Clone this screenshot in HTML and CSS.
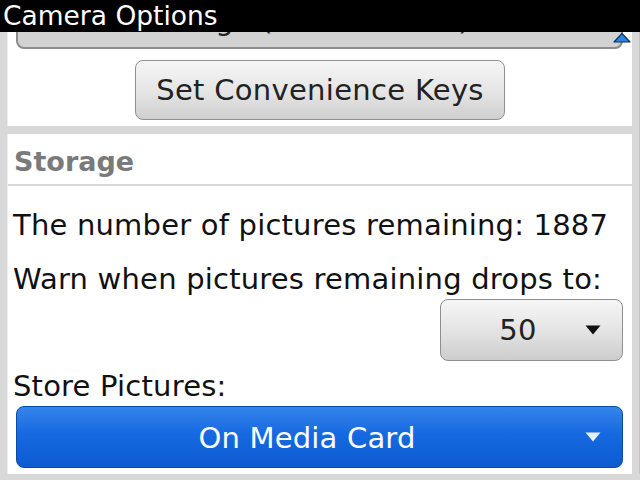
FILE: index.html
```html
<!DOCTYPE html>
<html lang="en">
<head>
<meta charset="UTF-8">
<title>Camera Options</title>
<link rel="stylesheet" href="styles.css">
</head>
<body>
<div class="titlebar">Camera Options</div>
<div class="screen">
    <div class="panel panel-top">
        <div class="choice choice-partial">
            <span class="choice-label">Large (2560 x 1920)</span>
            <svg class="scroll-up" width="18" height="11" viewBox="0 0 18 11">
                <path d="M1 10 L9 1.5 L17 10 Z" fill="#2b86e0" stroke="#0d2f5a" stroke-width="1.2" stroke-linejoin="round"/>
            </svg>
        </div>
        <button class="btn btn-keys">Set Convenience Keys</button>
    </div>
    <div class="panel panel-storage">
        <div class="section-title">Storage</div>
        <div class="line line-first">The number of pictures remaining: 1887</div>
        <div class="line line-warn">Warn when pictures remaining drops to:</div>
        <div class="choice choice-small">
            <span class="choice-label">50</span>
            <svg class="arrow" width="16" height="10" viewBox="0 0 16 10">
                <path d="M0.5 0.5 L15.5 0.5 L8 9.5 Z" fill="#111"/>
            </svg>
        </div>
        <div class="line line-store">Store Pictures:</div>
        <div class="choice choice-focus">
            <span class="choice-label">On Media Card</span>
            <svg class="arrow" width="16" height="10" viewBox="0 0 16 10">
                <path d="M0.5 0.5 L15.5 0.5 L8 9.5 Z" fill="#e8eef8"/>
            </svg>
        </div>
    </div>
</div>
</body>
</html>
```

FILE: styles.css
```css
body {
    margin: 0;
    width: 640px;
    height: 480px;
    overflow: hidden;
    background-color: #d8d8d8;
    font-family: "DejaVu Sans", "Liberation Sans", sans-serif;
    color: #111;
}
.titlebar {
    position: relative;
    z-index: 2;
    height: 32px;
    background-color: #000;
    color: #fff;
    font-size: 26.5px;
    line-height: 32px;
    padding-left: 3px;
}
.screen {
    display: flex;
    flex-direction: column;
    gap: 8px;
    padding: 0 7px 0 7px;
    border-right: 1px solid #c4c4c4;
    width: 625px;
}
.panel {
    background-color: #fff;
    border-left: 1px solid #ececec;
    overflow: hidden;
}
.panel-top {
    height: 94px;
    display: flex;
    flex-direction: column;
    align-items: center;
}
.choice {
    position: relative;
    display: flex;
    align-items: center;
    box-sizing: border-box;
    height: 62px;
    border-radius: 8px;
    font-size: 29px;
    letter-spacing: 0.2px;
}
.choice-label {
    flex: 1;
    text-align: center;
}
.choice-partial {
    align-self: stretch;
    margin: -45px 9px 0 8px;
    background-color: #d2d2d2;
    border: 2px solid #8c8c8c;
    color: #222;
    overflow: visible;
}
.choice-partial .choice-label {
    padding-top: 4px;
}
.scroll-up {
    position: absolute;
    right: -10px;
    bottom: 4px;
}
.btn {
    margin-top: 11px;
    width: 370px;
    height: 60px;
    border: 1px solid #8f8f8f;
    border-radius: 8px;
    background: linear-gradient(#f6f6f6, #e4e4e4 55%, #cfcfcf);
    font-family: inherit;
    font-size: 29px;
    letter-spacing: 0.3px;
    color: #222;
    padding: 0;
}
.panel-storage {
    height: 340px;
    display: flex;
    flex-direction: column;
}
.section-title {
    height: 52px;
    box-sizing: border-box;
    border-bottom: 2px solid #d6d6d6;
    padding: 9px 0 0 6px;
    font-size: 27px;
    font-weight: bold;
    color: #7a7a7a;
    line-height: 38px;
}
.line {
    font-size: 29px;
    letter-spacing: 0.2px;
    line-height: 40px;
    padding-left: 5px;
    white-space: nowrap;
}
.line-first {
    margin-top: 19px;
}
.line-warn {
    margin-top: 14px;
}
.line-store {
    margin-top: 5px;
}
.choice-small {
    align-self: flex-end;
    width: 183px;
    margin-right: 9px;
    border: 1px solid #8f8f8f;
    background: linear-gradient(#f6f6f6, #e2e2e2 55%, #cdcdcd);
    color: #222;
}
.choice-small .choice-label {
    padding-left: 10px;
}
.choice-small .arrow {
    margin-right: 21px;
}
.choice-focus {
    margin: 0 9px 0 8px;
    border: 1px solid #0b4aa6;
    background: linear-gradient(#3585ec, #1669e0 45%, #0c5bd2);
    color: #fff;
}
.choice-focus .choice-label {
    padding-left: 12px;
    padding-top: 2px;
}
.choice-focus .arrow {
    margin-right: 21px;
}
```
